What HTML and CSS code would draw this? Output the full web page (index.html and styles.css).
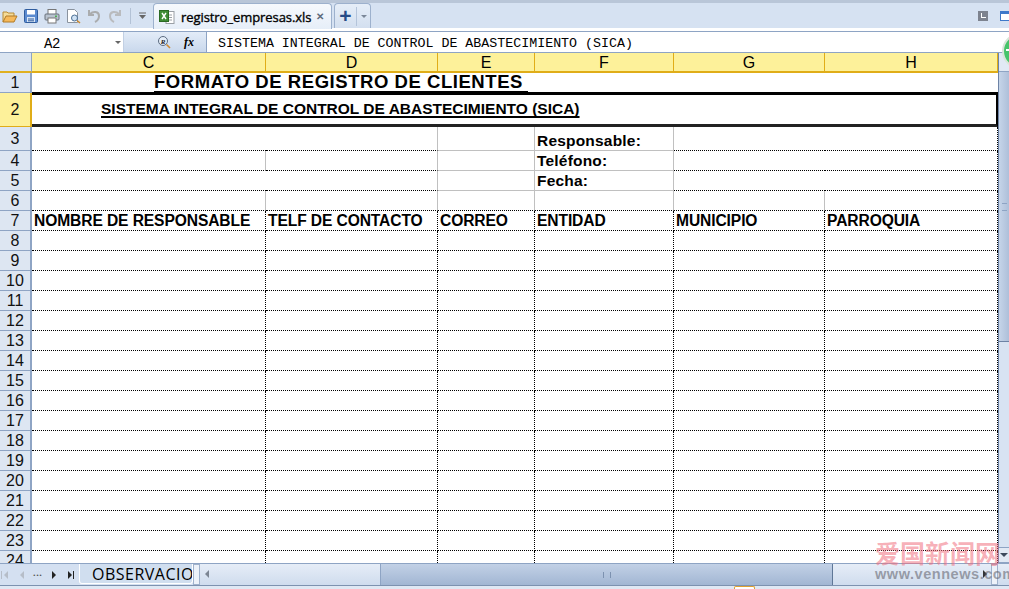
FILE: index.html
```html
<!DOCTYPE html>
<html lang="es">
<head>
<meta charset="utf-8">
<title>registro_empresas.xls</title>
<link rel="stylesheet" href="styles.css">
</head>
<body>
<div class="app">
  <div class="toolbar">
    <div class="qa">
      <svg class="ic" viewBox="0 0 16 16"><path d="M1 14V4h4l1 1h6v3" fill="#f4dc9a" stroke="#b88a35"/><path d="M1 14l3-6h11l-3 6z" fill="#f6b95a" stroke="#b07a28"/></svg>
      <svg class="ic" viewBox="0 0 16 16"><rect x="1.500" y="1.500" width="13" height="13" rx="1" fill="#5b8bd0" stroke="#2f5c9e"/><rect x="4" y="2" width="8" height="4.500" fill="#fff"/><rect x="4" y="9" width="8" height="5" fill="#dbe7f6"/><path d="M5 11h6M5 12.800h6" stroke="#2f5c9e"/></svg>
      <svg class="ic" viewBox="0 0 16 16"><rect x="4" y="1.500" width="8" height="5" fill="#fff" stroke="#777"/><rect x="1" y="6" width="14" height="6" rx="1" fill="#b9c3cf" stroke="#68707a"/><rect x="4" y="10" width="8" height="5" fill="#fff" stroke="#777"/><rect x="11" y="7.500" width="2" height="1.500" fill="#4caf50"/></svg>
      <svg class="ic" viewBox="0 0 16 16"><path d="M2.500 1.500h7l3 3v10h-10z" fill="#fff" stroke="#8a939e"/><circle cx="9.500" cy="10" r="3" fill="#cfe2f5" stroke="#4b6f95"/><path d="M12 12.500l3 2.500" stroke="#c9882e" stroke-width="1.600"/></svg>
      <svg class="ic dim" viewBox="0 0 16 16"><path d="M4 6c3-3 9-3 9 2 0 3-2 5-4 6M3 2v5h5" fill="none" stroke="#a3a3a3" stroke-width="2"/></svg>
      <svg class="ic dim" viewBox="0 0 16 16"><path d="M12 6C9 3 3 3 3 8c0 3 2 5 4 6M13 2v5H8" fill="none" stroke="#b5b5b5" stroke-width="2"/></svg>
      <span class="sep"></span>
      <svg class="drop" viewBox="0 0 9 8"><path d="M1 1h7" stroke="#666"/><path d="M1 3h7L4.500 7z" fill="#666"/></svg>
    </div>
    <div class="tab">
      <svg class="xls" viewBox="0 0 16 16"><rect x="7" y="2.500" width="8" height="12" fill="#fff" stroke="#9aa0a6"/><path d="M9 6h4M9 8.500h4M9 11h4" stroke="#9aa0a6"/><rect x="0.500" y="1.500" width="9" height="11" fill="#3f8c35" stroke="#2b6a24"/><path d="M3 4l4 6M7 4l-4 6" stroke="#fff" stroke-width="1.400"/></svg>
      <span class="tabname">registro_empresas.xls</span>
      <span class="close">✕</span>
    </div>
    <div class="newtab">
      <span class="plus">+</span>
      <span class="newdrop"></span>
    </div>
    <div class="spacer"></div>
    <div class="winicons">
      <span class="win-l"></span>
      <span class="win-r"></span>
    </div>
  </div>
  <div class="formula">
    <div class="namebox"><span class="name">A2</span><span class="namearrow"></span></div>
    <div class="fxbox">
      <svg class="zoomic" viewBox="0 0 14 14"><circle cx="6" cy="6" r="4.500" fill="#e4edf8" stroke="#5b6b80"/><text x="6" y="8.500" class="rletter">R</text><path d="M9.500 9.500L13 13" stroke="#d08a30" stroke-width="1.600"/></svg>
      <span class="fx">fx</span>
    </div>
    <div class="fvalue">SISTEMA INTEGRAL DE CONTROL DE ABASTECIMIENTO (SICA)</div>
  </div>
  <div class="main">
    <div class="sheet">
      <table class="grid">
        <colgroup>
          <col class="c0"><col class="c1"><col class="c2"><col class="c3"><col class="c4"><col class="c5"><col class="c6">
        </colgroup>
        <tr class="head">
          <th class="corner"></th><th class="ch">C</th><th class="ch">D</th><th class="ch">E</th><th class="ch">F</th><th class="ch">G</th><th class="ch">H</th>
        </tr>
        <tr class="r1">
          <th class="rh">1</th>
          <td colspan="6" class="title"><span class="titletext">FORMATO DE REGISTRO DE CLIENTES</span></td>
        </tr>
        <tr class="r2">
          <th class="rh sel">2</th>
          <td colspan="6" class="subtitle"><span class="subtext">SISTEMA INTEGRAL DE CONTROL DE ABASTECIMIENTO (SICA)</span></td>
        </tr>
        <tr class="r3">
          <th class="rh">3</th><td class="nv"></td><td class="gr"></td><td class="g"></td><td class="g lab">Responsable:</td><td class="nv"></td><td></td>
        </tr>
        <tr>
          <th class="rh">4</th><td class="gr"></td><td class="gr"></td><td class="g"></td><td class="g lab">Teléfono:</td><td class="nv"></td><td></td>
        </tr>
        <tr>
          <th class="rh">5</th><td class="nv"></td><td class="gr"></td><td class="g"></td><td class="g lab">Fecha:</td><td class="nv"></td><td></td>
        </tr>
        <tr>
          <th class="rh">6</th><td class="gr"></td><td class="gr"></td><td class="gr"></td><td class="gr"></td><td class="gr"></td><td></td>
        </tr>
        <tr class="cols">
          <th class="rh">7</th><td>NOMBRE DE RESPONSABLE</td><td>TELF DE CONTACTO</td><td>CORREO</td><td>ENTIDAD</td><td>MUNICIPIO</td><td>PARROQUIA</td>
        </tr>
        <tr><th class="rh">8</th><td></td><td></td><td></td><td></td><td></td><td></td></tr>
        <tr><th class="rh">9</th><td></td><td></td><td></td><td></td><td></td><td></td></tr>
        <tr><th class="rh">10</th><td></td><td></td><td></td><td></td><td></td><td></td></tr>
        <tr><th class="rh">11</th><td></td><td></td><td></td><td></td><td></td><td></td></tr>
        <tr><th class="rh">12</th><td></td><td></td><td></td><td></td><td></td><td></td></tr>
        <tr><th class="rh">13</th><td></td><td></td><td></td><td></td><td></td><td></td></tr>
        <tr><th class="rh">14</th><td></td><td></td><td></td><td></td><td></td><td></td></tr>
        <tr><th class="rh">15</th><td></td><td></td><td></td><td></td><td></td><td></td></tr>
        <tr><th class="rh">16</th><td></td><td></td><td></td><td></td><td></td><td></td></tr>
        <tr><th class="rh">17</th><td></td><td></td><td></td><td></td><td></td><td></td></tr>
        <tr><th class="rh">18</th><td></td><td></td><td></td><td></td><td></td><td></td></tr>
        <tr><th class="rh">19</th><td></td><td></td><td></td><td></td><td></td><td></td></tr>
        <tr><th class="rh">20</th><td></td><td></td><td></td><td></td><td></td><td></td></tr>
        <tr><th class="rh">21</th><td></td><td></td><td></td><td></td><td></td><td></td></tr>
        <tr><th class="rh">22</th><td></td><td></td><td></td><td></td><td></td><td></td></tr>
        <tr><th class="rh">23</th><td></td><td></td><td></td><td></td><td></td><td></td></tr>
        <tr><th class="rh">24</th><td></td><td></td><td></td><td></td><td></td><td></td></tr>
      </table>
    </div>
    <div class="vscroll">
      <div class="vup"></div>
      <div class="vthumb"><span class="grip"></span></div>
      <div class="vtrack"></div>
      <div class="vdown"><span class="vdown-arrow"></span></div>
    </div>
  </div>
  <div class="bottom">
    <div class="sheetnav">
      <span class="navcell"><span class="nav nl dimmed barl"></span></span>
      <span class="navcell"><span class="nav nl dimmed"></span></span>
      <span class="navcell dots">•••</span>
      <span class="navcell"><span class="nav nr"></span></span>
      <span class="navcell"><span class="nav nr barr"></span></span>
    </div>
    <div class="sheettab">OBSERVACIONES</div>
    <div class="splitter"></div>
    <div class="hscroll">
      <span class="hleft"></span>
      <div class="hthumb"><span class="hgrip"></span></div>
      <span class="hright"></span>
      <span class="hsplit"></span>
    </div>
  </div>
  <div class="status"><span class="statustab"></span></div>
</div>
<div class="badge"><span class="badgemark"></span></div>
<div class="wm">
  <div class="wm-cn">爱国新闻网</div>
  <div class="wm-en">www.vennews.com</div>
</div>
</body>
</html>
```
FILE: styles.css
```css
* { box-sizing: border-box; }
html, body { margin: 0; padding: 0; }
body { width: 1009px; height: 589px; overflow: hidden; position: relative; background: #fff; font-family: "Liberation Sans", Arial, sans-serif; }
.app { width: 1009px; height: 589px; display: flex; flex-direction: column; overflow: hidden; }

.toolbar { height: 32px; display: flex; align-items: flex-end; background: #d6e2f2; border-top: 3px solid #b9c6d8; border-bottom: 1px solid #8ea4c4; box-shadow: inset 0 -3px 0 #fff; padding-bottom: 3px; }
.qa { display: flex; align-items: center; gap: 5px; height: 25px; padding-left: 2px; width: 153px; flex: none; }
.ic { width: 16px; height: 16px; flex: none; }
.ic.dim { opacity: .85; }
.sep { width: 1px; height: 16px; background: #b3c2d6; margin-left: 2px; }
.drop { width: 9px; height: 8px; margin-left: 2px; }
.tab { width: 179px; height: 26px; background: linear-gradient(#f6f9fd, #e6eef8); border: 1px solid #9db1cd; border-bottom: 0; border-radius: 4px 4px 0 0; display: flex; align-items: center; padding-left: 5px; flex: none; margin-bottom: -1px; }
.xls { width: 16px; height: 16px; flex: none; }
.tabname { font: 13px "Open Sans", sans-serif; margin-left: 6px; color: #000; letter-spacing: -.07px; -webkit-text-stroke: .35px #000; white-space: nowrap; }
.close { font-size: 10px; color: #5e6b7c; margin-left: 5px; font-weight: bold; }
.newtab { width: 37px; height: 25px; margin-left: 2px; background: linear-gradient(#e6eef8, #d3dfef); border: 1px solid #9db1cd; border-bottom: 0; border-radius: 4px 4px 0 0; display: flex; align-items: center; flex: none; }
.plus { font: bold 21px/1 "Liberation Sans", sans-serif; color: #254a86; width: 22px; text-align: center; border-right: 1px solid #b4c4da; height: 19px; line-height: 18px; }
.newdrop { margin-left: 4px; border: 3px solid transparent; border-top: 3px solid #7b8798; margin-top: 3px; }
.spacer { flex: 1; }
.winicons { height: 25px; display: flex; align-items: center; gap: 12px; width: 31px; flex: none; overflow: hidden; }
.win-l { width: 10px; height: 10px; background: #7d838f; flex: none; position: relative; }
.win-l::after { content: ""; position: absolute; left: 3px; top: 2px; width: 4px; height: 4px; border-left: 1px solid #fff; border-bottom: 1px solid #fff; }
.win-r { width: 12px; height: 10px; background: #fff; border: 1px solid #3e78c9; border-top: 3px solid #3e78c9; flex: none; }

.formula { height: 21px; display: flex; background: #fff; border-bottom: 1px solid #8ea4c4; }
.namebox { width: 123px; display: flex; align-items: center; position: relative; flex: none; padding-top: 3px; }
.name { font: 14px "Liberation Mono", "DejaVu Sans Mono", monospace; margin-left: 44px; letter-spacing: -.5px; }
.namearrow { position: absolute; right: 2px; top: 9px; border: 3px solid transparent; border-top: 3px solid #666; }
.fxbox { width: 84px; background: linear-gradient(#e3ecf8, #c9d8ec); border-right: 1px solid #8ea4c4; border-left: 1px solid #c2d0e4; display: flex; align-items: center; flex: none; }
.zoomic { width: 14px; height: 14px; margin-left: 33px; }
.rletter { font: bold italic 7px "Liberation Serif", serif; text-anchor: middle; fill: #222; }
.fx { font: italic bold 12px "Liberation Serif", serif; margin-left: 13px; }
.fvalue { font: 13.300px "Liberation Mono", monospace; padding: 3px 0 0 11px; line-height: 18px; white-space: nowrap; color: #000; }

.main { flex: 1; display: flex; min-height: 0; }
.sheet { width: 998px; overflow: hidden; flex: none; }
.grid { border-collapse: separate; border-spacing: 0; table-layout: fixed; width: 998px; }
.c0 { width: 32px; } .c1 { width: 234px; } .c2 { width: 172px; } .c3 { width: 97px; } .c4 { width: 139px; } .c5 { width: 151px; } .c6 { width: 173px; }
.grid tr { height: 20px; }
.grid th, .grid td { padding: 0; overflow: hidden; white-space: nowrap; }
.grid td { border-right: 1px dotted #000; border-bottom: 1px dotted #000; font: bold 16px/19px "Liberation Sans", sans-serif; padding-left: 2px; color: #000; }
.corner { background: #dbe5f1; border-right: 1px solid #8ea4c4; border-bottom: 2px solid #e0b020; }
.ch { background: #fdf19a; border-right: 1px solid #e0ad18; border-bottom: 2px solid #e0ad18; font: 400 16px/17px "Liberation Sans", sans-serif; color: #000; }
.rh { background: #dde6f2; border-right: 2px solid #8ea4c4; border-bottom: 1px solid #8ea4c4; font: 400 16px/19px "Liberation Sans", sans-serif; color: #111; text-align: center; }
.rh.sel { background: #fdf19a; border-right-color: #e0ad18; border-bottom-color: #e0ad18; }
.grid td.title { border-right: 0; border-bottom: 0; font-size: 18.500px; line-height: 18px; padding-left: 122px; height: 20px; vertical-align: top; overflow: visible; box-shadow: inset 0 -1px 0 #000; }
.titletext { letter-spacing: .55px; display: block; width: 374px; height: 19px; border-bottom: 1px solid #000; }
.grid tr.r2 { height: 34px; }
.r2 .rh { line-height: 32px; }
.grid td.subtitle { height: 34px; border-top: 2px solid #000; border-right: 2px solid #000; border-bottom: 3px solid #222; padding-left: 69px; font-size: 15.500px; line-height: 27px; vertical-align: top; overflow: visible; text-decoration: underline; text-decoration-thickness: 2px; text-underline-offset: 2px; text-decoration-skip-ink: none; }
.grid tr.r3 { height: 24px; }
.grid tr.r3 .rh { line-height: 23px; }
.grid td.lab { font-size: 15.500px; letter-spacing: .2px; vertical-align: bottom; }
.grid td.nv { border-right: 0; }
.grid td.gr { border-right: 1px solid #c0c0c0; }
.grid td.g { border-right: 1px solid #c0c0c0; border-bottom: 1px solid #c0c0c0; }
.grid .cols td { font-size: 15.600px; letter-spacing: -.1px; }

.vscroll { width: 11px; flex: none; background: #d8e3f2; border-left: 1px solid #6d83a5; display: flex; flex-direction: column; }
.vup { height: 19px; flex: none; background: #e1e9f4; border-bottom: 1px solid #8ea4c4; }
.vthumb { height: 270px; flex: none; background: linear-gradient(90deg, #c6d5e9, #aebfd9); border-bottom: 1px solid #6d83a5; display: flex; align-items: center; justify-content: center; }
.grip { width: 5px; height: 8px; border-top: 1px solid #8ea4c4; border-bottom: 1px solid #8ea4c4; }
.vtrack { flex: 1; background: #d8e3f2; }
.vdown { height: 16px; flex: none; background: #e1e9f4; border: 1px solid #8ea4c4; border-left: 0; border-right: 0; display: flex; align-items: center; justify-content: center; }
.vdown-arrow { border: 4px solid transparent; border-top: 4px solid #3d4a5c; border-bottom: 0; }

.bottom { height: 23px; display: flex; background: #d4e0f1; border-top: 1px solid #8ea4c4; border-bottom: 1px solid #7d92b0; align-items: stretch; flex: none; position: relative; }
.sheetnav { width: 79px; display: flex; align-items: center; flex: none; padding-left: 0; }
.navcell { width: 16px; display: flex; justify-content: center; align-items: center; flex: none; position: relative; left: -2px; }
.nav { width: 0; height: 0; border: 4px solid transparent; position: relative; }
.nl { border-right-color: #222; border-left-width: 0; }
.nr { border-left-color: #222; border-right-width: 0; }
.nav.dimmed { border-right-color: #b6bdc8; }
.barl::before { content: ""; position: absolute; left: -3px; top: -4px; width: 1px; height: 8px; background: #b6bdc8; }
.barr::after { content: ""; position: absolute; left: 1px; top: -4px; width: 1px; height: 8px; background: #222; }
.dots { font-size: 6px; color: #555; letter-spacing: 1px; }
.sheettab { width: 114px; height: 20px; background: #d0deef; border: 1px solid #fff; border-top: 0; border-radius: 0 0 3px 3px; font: 16px/21px "Open Sans", sans-serif; padding-left: 12px; overflow: hidden; white-space: nowrap; color: #000; letter-spacing: .5px; flex: none; }
.splitter { width: 7px; background: #edf2f9; border: 1px solid #a0b2cc; flex: none; }
.hscroll { flex: 1; display: flex; align-items: stretch; background: linear-gradient(#e6edf7, #cfdcee); position: relative; }
.hleft { width: 0; height: 0; border: 4px solid transparent; border-right-color: #7d8694; border-left-width: 0; margin: 6px 0 0 5px; }
.hthumb { position: absolute; left: 180px; top: 0; bottom: 0; width: 453px; background: linear-gradient(#c2d1e6, #a2b6d3); border-left: 1px solid #8ea4c4; border-right: 1px solid #5f7797; display: flex; align-items: center; justify-content: center; }
.hgrip { width: 8px; height: 6px; border-left: 1px solid #7d92b0; border-right: 1px solid #7d92b0; }
.hright { position: absolute; right: 22px; top: 6px; border: 4px solid transparent; border-left-color: #333; border-right-width: 0; }
.hsplit { position: absolute; right: 11px; top: 0; bottom: 0; width: 7px; background: #edf2f9; border: 1px solid #a0b2cc; }

.status { height: 3px; flex: none; background: #dfe8f4; padding-left: 734px; }
.statustab { display: block; width: 21px; height: 3px; background: #fff; border: 1px solid #e0a030; border-bottom: 0; border-radius: 2px 2px 0 0; }

.badge { position: absolute; left: 1002px; top: 33px; width: 36px; height: 36px; border-radius: 50%; background: #46c46a; border: 2px solid #d8e6d8; }
.badgemark { position: absolute; left: 2px; top: 14px; width: 5px; height: 2px; background: #fff; }
.wm { position: absolute; left: 875px; top: 540px; width: 130px; }
.wm-cn { font: bold 25px/25px "Noto Sans CJK SC", sans-serif; color: rgba(240, 110, 125, .55); white-space: nowrap; }
.wm-en { font: bold 14.500px/16px "Liberation Sans", sans-serif; color: rgba(90, 90, 100, .55); white-space: nowrap; letter-spacing: .55px; margin-top: 1px; }
```
